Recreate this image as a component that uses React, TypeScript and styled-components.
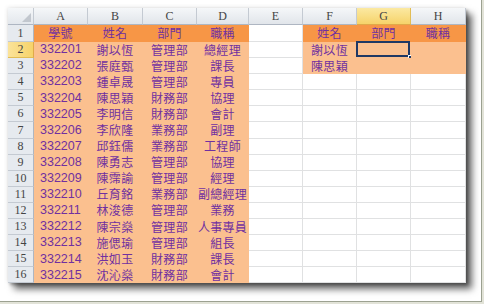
import React from "react";
import styled, { createGlobalStyle } from "styled-components";

const GlobalStyle = createGlobalStyle`
  html, body {
    margin: 0;
    padding: 0;
    background: #e2e3d8;
  }
  body {
    width: 484px;
    height: 304px;
    overflow: hidden;
  }
`;

const Frame = styled.div`
  width: 482px;
  height: 302px;
  box-sizing: border-box;
  padding: 8px 0 0 8px;
  background: #ffffff;
  border-right: 1px solid #9ca191;
  border-bottom: 1px solid #9ca191;
`;

const Sheet = styled.div`
  display: grid;
  grid-template-columns: 26px 54px 55px 54px 52px 54px 54px 54px 55px;
  grid-template-rows: 17px 17px repeat(15, 16.1px);
  width: 458px;
  background: #ffffff;
  box-shadow: 6px 6px 7px rgba(0, 0, 0, 0.6), 2px 2px 3px rgba(0, 0, 0, 0.3),
    -1px -1px 4px rgba(0, 0, 0, 0.08);
`;

const Corner = styled.div`
  position: relative;
  background: linear-gradient(#f5f7f9, #e3e7ec);
  border-right: 1px solid #c4cad2;
  border-bottom: 1px solid #aeb6c2;
  box-sizing: border-box;

  &::after {
    content: "";
    position: absolute;
    right: 2px;
    bottom: 2px;
    width: 0;
    height: 0;
    border-left: 9px solid transparent;
    border-bottom: 9px solid #c2c7ce;
  }
`;

const ColHead = styled.div<{ $active?: boolean }>`
  display: flex;
  align-items: center;
  justify-content: center;
  box-sizing: border-box;
  font-family: "Liberation Serif", "DejaVu Serif", serif;
  font-size: 12px;
  color: #444444;
  background: ${(p) =>
    p.$active
      ? "linear-gradient(#fbe9a2, #f6d36a)"
      : "linear-gradient(#f5f7f9, #e1e5ea)"};
  border-right: 1px solid ${(p) => (p.$active ? "#e2bd55" : "#c4cad2")};
  border-bottom: 1px solid ${(p) => (p.$active ? "#e0a94a" : "#aeb6c2")};
`;

const RowHead = styled.div<{ $active?: boolean }>`
  display: flex;
  align-items: center;
  justify-content: center;
  box-sizing: border-box;
  font-family: "Liberation Serif", "DejaVu Serif", serif;
  font-size: 12px;
  color: #444444;
  background: ${(p) =>
    p.$active ? "linear-gradient(90deg, #fbe39a, #f6d36a)" : "#e6eaef"};
  border-right: 1px solid ${(p) => (p.$active ? "#e0a94a" : "#aeb6c2")};
  border-bottom: 1px solid ${(p) => (p.$active ? "#e2bd55" : "#c4cad2")};
`;

type Fill = "head" | "data" | "none";

const fillColor: Record<Fill, string> = {
  head: "#f79646",
  data: "#fbc08f",
  none: "#ffffff",
};

const Cell = styled.div<{ $fill: Fill; $left?: boolean; $selected?: boolean }>`
  position: relative;
  display: flex;
  align-items: center;
  justify-content: ${(p) => (p.$left ? "flex-start" : "center")};
  padding-left: ${(p) => (p.$left ? "6px" : "0")};
  box-sizing: border-box;
  background: ${(p) => fillColor[p.$fill]};
  border-right: 1px solid ${(p) => (p.$fill === "none" ? "#e0e1e2" : fillColor[p.$fill])};
  border-bottom: 1px solid ${(p) => (p.$fill === "none" ? "#e0e1e2" : fillColor[p.$fill])};
  color: #7030a0;
  font-family: "Noto Sans CJK TC", "Noto Sans", sans-serif;
  font-size: 12px;
  line-height: 1;
  letter-spacing: 0.3px;
  white-space: nowrap;

  ${(p) =>
    p.$selected &&
    `
    &::before {
      content: "";
      position: absolute;
      left: -1px;
      top: -1px;
      right: 0;
      bottom: 0;
      border: 2px solid #1f3864;
    }
    &::after {
      content: "";
      position: absolute;
      right: -3px;
      bottom: -3px;
      width: 5px;
      height: 5px;
      background: #1f3864;
      border: 1px solid #ffffff;
      box-sizing: border-box;
    }
  `}
`;

const Num = styled.span`
  font-family: "Liberation Sans", Arial, sans-serif;
  font-size: 12.5px;
  letter-spacing: 0;
`;

const COLS = ["A", "B", "C", "D", "E", "F", "G", "H"];

const staff: [string, string, string, string][] = [
  ["332201", "謝以恆", "管理部", "總經理"],
  ["332202", "張庭甄", "管理部", "課長"],
  ["332203", "鍾卓晟", "管理部", "專員"],
  ["332204", "陳思穎", "財務部", "協理"],
  ["332205", "李明信", "財務部", "會計"],
  ["332206", "李欣隆", "業務部", "副理"],
  ["332207", "邱鈺儒", "業務部", "工程師"],
  ["332208", "陳勇志", "管理部", "協理"],
  ["332209", "陳霈諭", "管理部", "經理"],
  ["332210", "丘育銘", "業務部", "副總經理"],
  ["332211", "林浚德", "管理部", "業務"],
  ["332212", "陳宗燊", "管理部", "人事專員"],
  ["332213", "施偲瑜", "管理部", "組長"],
  ["332214", "洪如玉", "財務部", "課長"],
  ["332215", "沈沁燊", "財務部", "會計"],
];

const header = ["學號", "姓名", "部門", "職稱", "", "姓名", "部門", "職稱"];
const lookup = ["謝以恆", "陳思穎"];

function cellValue(row: number, col: number): string {
  if (row === 1) return header[col];
  if (col < 4) return staff[row - 2][col];
  if (col === 5 && row <= 3) return lookup[row - 2];
  return "";
}

function cellFill(row: number, col: number): Fill {
  if (col === 4) return "none";
  if (row === 1) return "head";
  if (col < 4) return "data";
  if (row <= 3) return "data";
  return "none";
}

export default function App() {
  const rows = Array.from({ length: 16 }, (_, i) => i + 1);

  return (
    <>
      <GlobalStyle />
      <Frame>
        <Sheet>
          <Corner />
          {COLS.map((c) => (
            <ColHead key={c} $active={c === "G"}>
              {c}
            </ColHead>
          ))}
          {rows.map((r) => (
            <React.Fragment key={r}>
              <RowHead $active={r === 2}>{r}</RowHead>
              {COLS.map((c, ci) => {
                const value = cellValue(r, ci);
                const isNum = r > 1 && ci === 0;
                return (
                  <Cell
                    key={c}
                    $fill={cellFill(r, ci)}
                    $left={isNum}
                    $selected={r === 2 && c === "G"}
                  >
                    {isNum ? <Num>{value}</Num> : value}
                  </Cell>
                );
              })}
            </React.Fragment>
          ))}
        </Sheet>
      </Frame>
    </>
  );
}
